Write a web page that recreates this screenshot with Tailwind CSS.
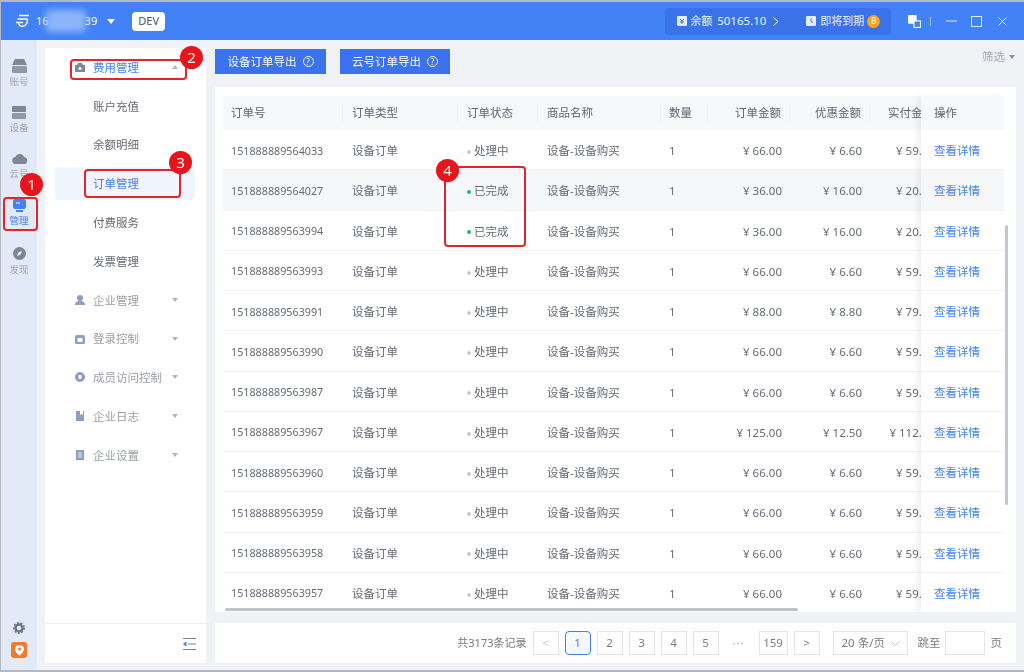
<!DOCTYPE html>
<html lang="zh-CN">
<head>
  <meta charset="UTF-8">
  <script src="https://cdn.jsdelivr.net/npm/@tailwindcss/browser@4"></script>
  <title>订单管理</title>
</head>
<body class="bg-[#f0f2f5]">
<div class="relative w-[1024px] h-[672px] overflow-hidden flex flex-col border-l border-t-2 border-b-2 border-[#b4b8c0] text-[11.5px] text-[#666b75] blur-[0.35px] font-['Noto_Sans','Noto_Sans_CJK_SC',sans-serif]">

  <!-- title bar -->
  <div class="h-[38px] shrink-0 bg-[#4282f6] flex items-center text-white">
    <svg class="ml-[14px] w-[15px] h-[14px]" viewBox="0 0 15 14" fill="none" stroke="white" stroke-width="1.4"><path d="M4 1.500h10M2.500 5h10M1 8.500h7"/><path d="M3.500 8.500c0 3.500 3 4.500 5.500 3.500s3.500-3.500 3.500-7"/></svg>
    <span class="ml-[6px] text-[11px]">16</span>
    <span class="w-[40px] h-[22px] -ml-[3px] rounded-sm bg-[#8db4fa] blur-[3px]"></span>
    <span class="-ml-[1px] text-[11px]">39</span>
    <span class="ml-[10px] w-0 h-0 border-x-[4px] border-x-transparent border-t-[5px] border-t-white"></span>
    <span class="ml-[17px] w-[33px] h-[19px] rounded-sm bg-white text-[#555] text-[11px] flex items-center justify-center">DEV</span>
    <div class="ml-[500px] w-[226px] h-[27px] rounded bg-[#3a72ea] flex items-center text-[11px] text-white/90">
      <svg class="ml-[12px] w-[10px] h-[10px]" viewBox="0 0 10 10"><rect width="10" height="10" rx="1" fill="#e4ecff"/><path d="M3 3l2 2 2-2M5 5v3M3 6h4" stroke="#3a72ea" fill="none"/></svg>
      <span class="ml-[3px]">余额</span>
      <span class="ml-[5px] text-[11.5px]">50165.10</span>
      <svg class="ml-[6px] w-[7px] h-[11px]" viewBox="0 0 7 11" fill="none" stroke="white"><path d="M1 1l5 4.500-5 4.500"/></svg>
      <svg class="ml-[27px] w-[10px] h-[10px]" viewBox="0 0 10 10"><rect width="10" height="10" rx="1" fill="#e4ecff"/><path d="M5 2.500v3l2 1" stroke="#3a72ea" fill="none"/></svg>
      <span class="ml-[4px]">即将到期</span>
      <span class="ml-[3px] w-[13px] h-[13px] rounded-full bg-[#f5a623] text-[9px] flex items-center justify-center">8</span>
    </div>
    <svg class="ml-[17px] w-[13px] h-[13px]" viewBox="0 0 12 12" fill="none"><rect width="8" height="8" rx="1" fill="white"/><rect x="5.500" y="5.500" width="6" height="6" fill="#4282f6" stroke="white"/></svg>
    <span class="ml-[9px] w-px h-[9px] bg-white/50"></span>
    <svg class="ml-[15px] w-[11px] h-[2px]" viewBox="0 0 11 2"><path d="M0 1h11" stroke="white" opacity=".85"/></svg>
    <svg class="ml-[14px] w-[11px] h-[11px]" viewBox="0 0 11 11" fill="none" stroke="white" opacity=".85"><rect x=".5" y=".5" width="10" height="10"/></svg>
    <svg class="ml-[16px] w-[9px] h-[9px]" viewBox="0 0 9 9" fill="none" stroke="white" opacity=".9"><path d="M.5.500l8 8M8.500.500l-8 8"/></svg>
  </div>

  <div class="flex-1 flex min-h-0">
    <!-- icon rail -->
    <div class="w-[36px] shrink-0 bg-[#e2e9f7] flex flex-col items-center pt-[19px] text-[9.5px] text-[#a0a6b2]">
      <svg class="w-[15px] h-[14px]" viewBox="0 0 15 14"><path d="M3 0h9l3 6H0z" fill="#7d8798"/><rect y="7" width="15" height="7" rx="1" fill="#8f98a8"/></svg>
      <span class="mt-[1px] leading-[16px]">账号</span>
      <div class="mt-[16px] w-[14px] flex flex-col gap-[1px]"><span class="h-[6px] bg-[#7d8798] rounded-[1px]"></span><span class="h-[6px] bg-[#8f98a8] rounded-[1px]"></span></div>
      <span class="mt-[1px] leading-[16px]">设备</span>
      <svg class="mt-[17px] w-[15px] h-[11px]" viewBox="0 0 15 11"><path d="M4 11a3.500 3.500 0 0 1-.5-7A4.500 4.500 0 0 1 12 4a3.500 3.500 0 0 1-.5 7z" fill="#7d8798"/></svg>
      <span class="mt-[2px] leading-[16px]">云号</span>
      <svg class="mt-[17px] w-[13px] h-[13px]" viewBox="0 0 13 13"><rect width="13" height="10" rx="2" fill="#4282f6"/><rect x="3" y="11" width="7" height="2" fill="#4282f6"/><path d="M3 4h4" stroke="#fff"/></svg>
      <span class="mt-[1px] leading-[16px] text-[#4282f6]">管理</span>
      <svg class="mt-[18px] w-[13px] h-[13px]" viewBox="0 0 13 13"><circle cx="6.500" cy="6.500" r="6.500" fill="#7d8798"/><path d="M9 4L7.500 7.500 4 9l1.500-3.500z" fill="#fff"/></svg>
      <span class="mt-[2px] leading-[16px]">发现</span>
      <svg class="mt-auto w-[12px] h-[12px]" viewBox="0 0 12 12" fill="none"><circle cx="6" cy="6" r="3.500" stroke="#6d7380" stroke-width="2.400"/><circle cx="6" cy="6" r="5.200" stroke="#6d7380" stroke-width="1.400" stroke-dasharray="2 1.640"/></svg>
      <span class="mt-[8px] mb-[12px] w-[16px] h-[16px] rounded-[3px] bg-[#f07b28] flex items-center justify-center">
        <svg class="w-[9px] h-[11px]" viewBox="0 0 9 11"><path d="M4.500 0C7 0 9 1.500 9 4c0 3-3 5-4.500 7C3 9 0 7 0 4c0-2.500 2-4 4.500-4z" fill="#fff"/><circle cx="4.500" cy="4" r="1.500" fill="#f07b28"/></svg>
      </span>
    </div>

    <!-- side menu -->
    <div class="ml-[8px] mt-[8px] mb-[7px] w-[161px] shrink-0 bg-white flex flex-col">
      <div id="menu" class="flex-1"></div>
      <div class="h-[40px] border-t border-[#eceff5] flex items-center justify-end pr-[10px]">
        <svg class="w-[13px] h-[12px]" viewBox="0 0 13 12" fill="none" stroke="#7b8290"><path d="M0 .5h13M0 11.500h13M5 6h8"/><path d="M3 4L0.500 6 3 8z" fill="#4282f6" stroke="#4282f6"/></svg>
      </div>
    </div>

    <!-- main -->
    <div class="ml-[9px] mr-[8px] flex-1 min-w-0 flex flex-col">
      <div class="h-[47px] shrink-0 flex items-start pt-[9px]">
        <button class="w-[111px] h-[25px] bg-[#3b72f0] text-white flex items-center justify-center gap-[6px]">设备订单导出 <span class="w-[11px] h-[11px] rounded-full border border-white text-[8px] leading-[9px] text-center">?</span></button>
        <button class="ml-[14px] w-[110px] h-[25px] bg-[#3b72f0] text-white flex items-center justify-center gap-[6px]">云号订单导出 <span class="w-[11px] h-[11px] rounded-full border border-white text-[8px] leading-[9px] text-center">?</span></button>
        <span class="ml-auto mr-[1px] mt-[-1px] flex items-center gap-[4px] text-[#a3a8b2]">筛选 <span class="w-0 h-0 border-x-[3px] border-x-transparent border-t-[4px] border-t-[#8b909a]"></span></span>
      </div>

      <!-- table card -->
      <div class="relative h-[525px] shrink-0 bg-white pl-[8px] pt-[9px] overflow-hidden">
        <div class="flex h-[516px] w-[785px]">
          <div class="w-[698px] shrink-0 overflow-hidden">
            <div class="w-[740px]">
              <div id="thead" class="h-[34px] pb-[1px] flex items-center bg-[#f7f8fa] text-[#5f646e]"></div>
              <div id="tbody"></div>
            </div>
          </div>
          <!-- fixed action column -->
          <div class="w-[83px] shrink-0 bg-white shadow-[-4px_0_6px_rgba(0,0,0,0.06)] z-10">
            <div class="h-[34px] pb-[1px] bg-[#f7f8fa] flex items-center pl-[13px] text-[#5f646e]">操作</div>
            <div id="actions" class="text-[#4282f6]"></div>
          </div>
          <div class="ml-[1px] w-[4px] pt-[129px]"><div class="h-[280px] rounded bg-[#c4c7cd]"></div></div>
        </div>
        <div class="absolute left-[10px] bottom-[1px] w-[573px] h-[3px] rounded bg-[#c0c3c9]"></div>
      </div>

      <!-- pagination -->
      <div class="mt-[11px] mb-[7px] flex-1 bg-white flex items-center justify-end pr-[14px] text-[#777c86]">
        <span class="mr-[6px] text-[11px]">共3173条记录</span>
        <div class="flex items-center gap-[6px]">
          <span class="w-[26px] h-[24px] border border-[#e3e5e9] flex items-center justify-center text-[#c2c5cb]">&lt;</span>
          <span class="w-[26px] h-[24px] border border-[#4282f6] rounded-sm bg-[#f5f8ff] text-[#4282f6] flex items-center justify-center">1</span>
          <span class="w-[26px] h-[24px] border border-[#e3e5e9] flex items-center justify-center">2</span>
          <span class="w-[26px] h-[24px] border border-[#e3e5e9] flex items-center justify-center">3</span>
          <span class="w-[26px] h-[24px] border border-[#e3e5e9] flex items-center justify-center">4</span>
          <span class="w-[26px] h-[24px] border border-[#e3e5e9] flex items-center justify-center">5</span>
          <span class="w-[28px] text-center text-[#a8acb4] tracking-[1px]">···</span>
          <span class="w-[29px] h-[24px] border border-[#e3e5e9] flex items-center justify-center">159</span>
          <span class="w-[26px] h-[24px] border border-[#e3e5e9] flex items-center justify-center">&gt;</span>
        </div>
        <span class="ml-[13px] w-[75px] h-[24px] border border-[#e3e5e9] flex items-center pl-[8px] whitespace-nowrap">20 条/页
          <svg class="ml-[6px] w-[9px] h-[5px]" viewBox="0 0 9 5" fill="none" stroke="#c2c5cb"><path d="M.5.500l4 4 4-4"/></svg>
        </span>
        <span class="ml-[10px]">跳至</span>
        <span class="ml-[4px] w-[40px] h-[24px] border border-[#e3e5e9]"></span>
        <span class="ml-[6px]">页</span>
      </div>
    </div>
  </div>

  <!-- red annotations laid over the screenshot -->
  <div class="absolute left-[2px] top-[195px] w-[35px] h-[34px] border-2 border-[#e3242b] rounded-sm"></div>
  <div class="absolute left-[69px] top-[57px] w-[117px] h-[21px] border-2 border-[#e3242b] rounded-sm"></div>
  <div class="absolute left-[83px] top-[167px] w-[97px] h-[29px] border-2 border-[#e3242b] rounded-sm"></div>
  <div class="absolute left-[443px] top-[164px] w-[82px] h-[81px] border-2 border-[#e3242b] rounded-sm"></div>
  <span class="absolute left-[19px] top-[171px] w-[23px] h-[23px] rounded-full bg-[#e8141c] text-white text-[15px] flex items-center justify-center">1</span>
  <span class="absolute left-[179px] top-[44px] w-[23px] h-[23px] rounded-full bg-[#e8141c] text-white text-[15px] flex items-center justify-center">2</span>
  <span class="absolute left-[168px] top-[149px] w-[23px] h-[23px] rounded-full bg-[#e8141c] text-white text-[15px] flex items-center justify-center">3</span>
  <span class="absolute left-[435px] top-[157px] w-[23px] h-[23px] rounded-full bg-[#e8141c] text-white text-[15px] flex items-center justify-center">4</span>
</div>

<script>
  const cols = [
    ['订单号', 'w-[120px] pl-[8px]'],
    ['订单类型', 'w-[115px] pl-[9px]'],
    ['订单状态', 'w-[80px] pl-[9px]'],
    ['商品名称', 'w-[123px] pl-[9px]'],
    ['数量', 'w-[47px] pl-[8px]'],
    ['订单金额', 'w-[82px] pr-[8px] text-right'],
    ['优惠金额', 'w-[80px] pr-[8px] text-right'],
    ['实付金额', 'w-[73px] pr-[8px] text-right']
  ];
  const rows = [
    ['151888889564033', 0, '66.00', '6.60', '59.40'],
    ['151888889564027', 1, '36.00', '16.00', '20.00'],
    ['151888889563994', 1, '36.00', '16.00', '20.00'],
    ['151888889563993', 0, '66.00', '6.60', '59.40'],
    ['151888889563991', 0, '88.00', '8.80', '79.20'],
    ['151888889563990', 0, '66.00', '6.60', '59.40'],
    ['151888889563987', 0, '66.00', '6.60', '59.40'],
    ['151888889563967', 0, '125.00', '12.50', '112.50'],
    ['151888889563960', 0, '66.00', '6.60', '59.40'],
    ['151888889563959', 0, '66.00', '6.60', '59.40'],
    ['151888889563958', 0, '66.00', '6.60', '59.40'],
    ['151888889563957', 0, '66.00', '6.60', '59.40']
  ];

  // table head and body
  document.getElementById('thead').innerHTML = cols.map(c =>
    `<div class="${c[1]} shrink-0 border-r border-[#eff0f3] leading-[18px]">${c[0]}</div>`).join('');

  document.getElementById('tbody').innerHTML = rows.map((r, i) => {
    const status = r[1]
      ? '<span class="inline-block w-[4px] h-[4px] rounded-full bg-[#19b77f] mr-[3px] align-middle"></span>已完成'
      : '<span class="inline-block w-[4px] h-[4px] rounded-full bg-[#c8cbd1] mr-[3px] align-middle"></span>处理中';
    const vals = [r[0], '设备订单', status, '设备-设备购买', '1', '¥ ' + r[2], '¥ ' + r[3], '¥ ' + r[4]];
    const bg = i === 1 ? 'bg-[#f6f7f9]' : '';
    return `<div class="h-[40.25px] pt-[2px] flex items-center border-b border-[#f1f2f5] ${bg}">` +
      vals.map((v, j) => `<div class="${cols[j][1]} ${j === 0 ? 'text-[10.75px]' : ''} shrink-0 whitespace-nowrap">${v}</div>`).join('') + '</div>';
  }).join('');

  document.getElementById('actions').innerHTML = rows.map((r, i) =>
    `<div class="h-[40.25px] pt-[2px] flex items-center pl-[13px] border-b border-[#f1f2f5] ${i === 1 ? 'bg-[#f6f7f9]' : ''}">查看详情</div>`).join('');

  // side menu icons, one per group
  const icons = {
    '费用管理': '<path d="M3 1h4l1 2h2v7H0V3h2z" fill="#7d8798"/><circle cx="5" cy="6.500" r="1.500" fill="#fff"/>',
    '企业管理': '<circle cx="5" cy="3" r="3" fill="#8e9fc6"/><path d="M0 10c0-3 2-4 5-4s5 1 5 4z" fill="#8e9fc6"/>',
    '登录控制': '<rect y="1" width="10" height="9" rx="1.500" fill="#8e9fc6"/><rect x="2.500" y="4" width="5" height="4" fill="#fff"/>',
    '成员访问控制': '<circle cx="5" cy="5" r="5" fill="#8e9fc6"/><rect x="3.500" y="3" width="3" height="4" rx="1" fill="#fff"/>',
    '企业日志': '<path d="M1 0h8v10H1z" fill="#8e9fc6"/><path d="M5 0h3v4L6.500 3 5 4z" fill="#fff"/>',
    '企业设置': '<path d="M1 0h8v10H1z" fill="#8e9fc6"/><path d="M3 3h4M3 5h4M3 7h4" stroke="#fff" stroke-width=".8"/>'
  };

  // side menu
  const menu = [
    ['费用管理', 1, 'up'], ['账户充值'], ['余额明细'], ['订单管理', 0, 'active'], ['付费服务'], ['发票管理'],
    ['企业管理', 1], ['登录控制', 1], ['成员访问控制', 1], ['企业日志', 1], ['企业设置', 1]
  ];
  document.getElementById('menu').innerHTML = menu.map(m => {
    const blue = m[2] ? 'text-[#4282f6]' : (m[1] ? 'text-[#9a9ea8]' : 'text-[#666b75]');
    const icon = m[1] ? `<svg class="absolute left-[30px] top-[14px] w-[10px] h-[10px]" viewBox="0 0 10 10">${icons[m[0]]}</svg>` : '';
    const arrow = m[1]
      ? `<span class="absolute left-[127px] top-[17px] w-0 h-0 border-x-[3.5px] border-x-transparent ${m[2] === 'up' ? 'border-b-[4px] border-b-[#b0b4bc]' : 'border-t-[4px] border-t-[#b0b4bc]'}"></span>`
      : '';
    const bar = m[2] === 'active' ? '<span class="absolute left-[10px] right-[11px] top-[3px] bottom-[3px] rounded bg-[#f0f4fd]"></span>' : '';
    return `<div class="relative h-[38.8px] flex items-center pl-[48px] ${blue}">${bar}${icon}<span class="relative">${m[0]}</span>${arrow}</div>`;
  }).join('');
</script>
</body>
</html>
